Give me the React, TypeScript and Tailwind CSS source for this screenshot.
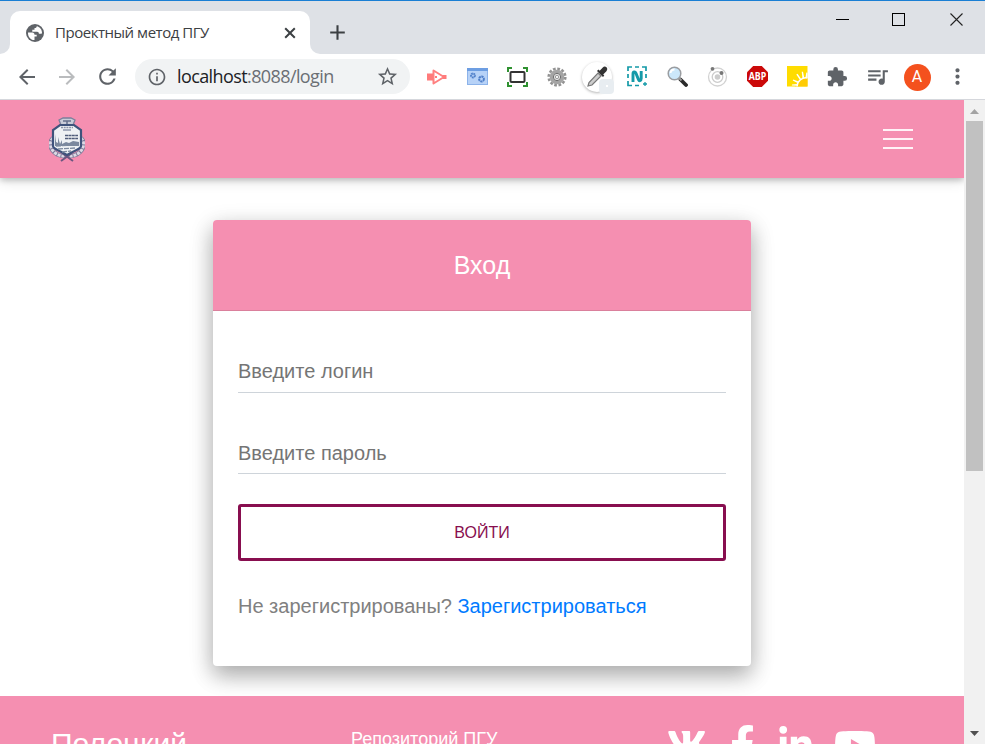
import React from "react";
import { FaVk, FaFacebookF, FaLinkedinIn, FaYoutube } from "react-icons/fa";
import { MdArrowBack, MdArrowForward, MdRefresh, MdInfoOutline, MdStarBorder, MdExtension, MdQueueMusic, MdMoreVert, MdAdd } from "react-icons/md";

const chromeFont = "font-['Open_Sans','Noto_Sans',sans-serif]";

function Cell({ children }: { children: React.ReactNode }) {
  return <div className="flex h-10 w-10 shrink-0 items-center justify-center">{children}</div>;
}

function TabStrip() {
  return (
    <div className="flex h-[54px] items-start justify-between border-t border-[#1a7fd4] bg-[#dee1e6]">
      <div className="flex">
        <div className="mt-[43px] h-[10px] w-[10px] bg-white">
          <div className="h-full w-full rounded-br-[10px] bg-[#dee1e6]" />
        </div>
        <div className="mt-[10px] flex h-[43px] w-[300px] items-center rounded-t-[10px] bg-white pl-[16px] pr-[11px]">
          <svg width="18" height="18" viewBox="0 0 18 18">
            <circle cx="9" cy="9" r="9" fill="#5f6368" />
            <path d="M2 8.500h4.500c1.200 0 2 1 2 2.200h2.200v1.800H8.500v3.600C4.700 16.300 1.700 12.700 2 8.500z" fill="#fff" />
            <path d="M10.800 2.200c-.2 1.300-1 1.800-2.300 1.800v1.700H6.300v2h4.800c1.200 0 1.800.8 1.800 2h2c.7.300 1-.2 1.100-.8.200-3.200-2.100-6-5.200-6.700z" fill="#fff" />
          </svg>
          <span className={`${chromeFont} ml-[11px] flex-1 whitespace-nowrap text-[15px] tracking-[-0.47px] text-[#3c4043]`}>Проектный метод ПГУ</span>
          <svg width="18" height="18" viewBox="0 0 18 18">
            <path d="M4.200 4.200l9.600 9.600M13.800 4.200l-9.600 9.600" stroke="#3c4043" strokeWidth="2" />
          </svg>
        </div>
        <div className="mt-[43px] h-[10px] w-[10px] bg-white">
          <div className="h-full w-full rounded-bl-[10px] bg-[#dee1e6]" />
        </div>
        <MdAdd className="ml-[5px] mt-[19px]" size={25} color="#3c4043" />
      </div>
      <div className="flex gap-[43px] pr-[21px] pt-[12px]">
        <svg width="14" height="14"><path d="M0 6.500H13" stroke="#000" /></svg>
        <svg className="-ml-px" width="14" height="14"><rect x=".5" y=".5" width="12" height="12" fill="none" stroke="#000" /></svg>
        <svg className="ml-px" width="14" height="14"><path d="M.5.5l12 12M12.500.5l-12 12" stroke="#222" strokeWidth="1.100" /></svg>
      </div>
    </div>
  );
}

function Toolbar() {
  return (
    <div className="flex h-[46px] items-center border-b border-[#d5d7dc] bg-white pl-[7px]">
      <Cell><MdArrowBack size={24} color="#5f6368" /></Cell>
      <Cell><MdArrowForward size={24} color="#babcbe" /></Cell>
      <Cell><MdRefresh size={25} color="#5f6368" /></Cell>
      <div className="ml-[8px] mr-[7px] flex h-[35px] w-[275px] shrink-0 items-center rounded-full bg-[#f1f3f4] pl-[12px] pr-[11px]">
        <MdInfoOutline size={20} color="#5f6368" />
        <span className={`${chromeFont} ml-[10px] flex-1 text-[18px] tracking-[-0.6px] text-[#202124]`}>
          localhost<span className="text-[#6b6f74]">:8088/login</span>
        </span>
        <MdStarBorder size={23} color="#5f6368" />
      </div>
      <Cell>
        <svg width="20" height="18" viewBox="0 0 20 18">
          <path d="M6.500 2.500L17 9 6.500 15.500z" fill="#fff" stroke="#ff8080" strokeWidth="2" strokeLinejoin="round" />
          <path d="M0 5.500h6v7H0zM8 8h2v2H8zM15.500 7h4v4h-4z" fill="#ff7b7b" />
        </svg>
      </Cell>
      <Cell>
        <svg width="21" height="17" viewBox="0 0 21 17">
          <rect x=".5" y=".5" width="20" height="16" fill="#b7d2f7" stroke="#8cb3ea" />
          <path d="M0 0h21v3H0z" fill="#6d9ee2" />
          <circle cx="6" cy="7.500" r="1.900" fill="none" stroke="#4f7fc9" strokeWidth="2" strokeDasharray="1.600 .5" />
          <circle cx="14.500" cy="11" r="2.400" fill="none" stroke="#4f7fc9" strokeWidth="2" strokeDasharray="2 .5" />
        </svg>
      </Cell>
      <Cell>
        <svg width="21" height="20" viewBox="0 0 21 20" fill="none">
          <path d="M1 5V1h4M16 1h4v4M20 15v4h-4M5 19H1v-4" stroke="#2f9130" strokeWidth="2" />
          <rect x="3.500" y="5" width="14" height="10" rx="1" stroke="#333" strokeWidth="2" />
        </svg>
      </Cell>
      <Cell>
        <svg width="20" height="20" viewBox="0 0 20 20" fill="none">
          <circle cx="10" cy="10" r="8.300" stroke="#929292" strokeWidth="2.600" strokeDasharray="2.700 1.650" />
          <circle cx="10" cy="10" r="5.700" fill="#d2d2d2" stroke="#a5a5a5" strokeWidth="3.200" />
          <circle cx="10" cy="10" r="3.700" fill="#ddd" stroke="#6f6f6f" />
          <circle cx="10" cy="10" r="1.600" fill="#fff" stroke="#999" />
        </svg>
      </Cell>
      <Cell>
        <div className="relative flex h-[30px] w-[30px] items-center justify-center rounded-full bg-white shadow-[0_1px_3px_rgba(0,0,0,0.3)]">
          <svg width="21" height="21" viewBox="0 0 21 21">
            <path d="M1 20l1-3.500L11 7l3 3-9 9z" fill="#ccc" stroke="#777" strokeWidth="1.200" />
            <path d="M10 5l6 6 1.300-1.400-1.100-1.200 3.200-3.200C22 2 18-1 15.800 1.500L12.700 4.700l-1.300-1.100z" fill="#333" />
          </svg>
          <div className="absolute -bottom-[2px] -right-[2px] flex h-[15px] w-[15px] items-center justify-center rounded-sm bg-[#e8edf1]">
            <div className="h-[2px] w-[2px] bg-white" />
          </div>
        </div>
      </Cell>
      <Cell>
        <svg width="22" height="21" viewBox="0 0 22 21" fill="none" stroke="#149aa8">
          <path d="M2 5V1h4M9 1h4M16 1h4v4M2 8v4M2 15v4.500h4M9 19.500h4M20 8v4" strokeWidth="1.700" />
          <path d="M7 16V8c0-2.600 2.200-2.600 3-.6l2.400 6c.8 2 2.800 1.600 2.800-.8V5" strokeWidth="2.900" />
          <path d="M19 16v4M17 18h4" strokeWidth="1.300" />
        </svg>
      </Cell>
      <Cell>
        <svg width="21" height="21" viewBox="0 0 21 21">
          <path d="M13.500 13.500L19 19" stroke="#2b2b2b" strokeWidth="3.800" strokeLinecap="round" />
          <path d="M11.500 11.500l3 3" stroke="#999" strokeWidth="2" />
          <circle cx="7.500" cy="7.500" r="6.300" fill="#cce8fb" stroke="#9a9da1" strokeWidth="1.500" />
          <path d="M3.500 7a4 4 0 0 1 4-3.500" fill="none" stroke="#fff" strokeWidth="2" />
        </svg>
      </Cell>
      <Cell>
        <svg width="21" height="21" viewBox="0 0 21 21" fill="none">
          <circle cx="10.500" cy="11" r="9" stroke="#d2d2d2" strokeWidth="1.300" />
          <circle cx="10.500" cy="11" r="5.300" stroke="#ccc" strokeWidth="1.300" />
          <circle cx="10.500" cy="11" r="2.800" fill="#ccc" />
          <circle cx="5.500" cy="2.800" r="1.900" fill="#777" />
          <circle cx="14.500" cy="7" r="2" fill="#777" />
        </svg>
      </Cell>
      <Cell>
        <svg width="21" height="21" viewBox="0 0 21 21">
          <path d="M6.200 0h8.600L21 6.200v8.600L14.800 21H6.200L0 14.800V6.200z" fill="#cb0909" />
          <text x="10.500" y="14" textAnchor="middle" textLength="17.500" lengthAdjust="spacingAndGlyphs" className="font-['Open_Sans',sans-serif] text-[10px] font-bold" fill="#fff">ABP</text>
        </svg>
      </Cell>
      <Cell>
        <svg width="21" height="21" viewBox="0 0 21 21">
          <path d="M0 0h20.500v20.500H0z" fill="#ffdc00" />
          <path d="M8.500 20.500C9 14.500 14 11 20.500 11.500v9z" fill="#ffcb05" />
          <path d="M10 20.500c0-5 5-9.500 10.500-8.500" fill="none" stroke="#fff" strokeWidth="1.500" />
          <path d="M9.700 19.800l-4.900-.3.200-1 5-.5zM10.500 17l-4.800-2.500.6-1 5.200 2zM13 14L9.300 8.500l1.200-.7 3.700 5.200zM15.500 12.300l-.8-6.500 1.300-.1 1.300 6.200zM18.500 11.500l.8-5 1.200.2v5z" fill="#fff" />
        </svg>
      </Cell>
      <Cell><MdExtension size={22} color="#5f6368" /></Cell>
      <Cell><MdQueueMusic size={25} color="#5f6368" /></Cell>
      <Cell>
        <div className="mt-px flex h-[27px] w-[27px] items-center justify-center rounded-full bg-[#f4511e] font-[Roboto,sans-serif] text-[16px] text-white">A</div>
      </Cell>
      <Cell><MdMoreVert size={25} color="#5f6368" /></Cell>
    </div>
  );
}

function Crest() {
  return (
    <svg width="36" height="45" viewBox="0 0 36 45" fill="none">
      <path d="M4 21C0 25 1 31 5 35c3 3 7 4 11 4M32 21c4 4 3 10-1 14-3 3-7 4-11 4" stroke="#7c7797" strokeWidth="4.500" />
      <path d="M4 21C0 25 1 31 5 35c3 3 7 4 11 4M32 21c4 4 3 10-1 14-3 3-7 4-11 4" stroke="#dcd9e4" strokeWidth="3" strokeDasharray="3 1" />
      <path d="M12 44l11-8M24 44l-11-8" stroke="#6b5680" strokeWidth="2" />
      <path d="M12 8l-2-5 4-2h8l4 2-2 5z" fill="#c9ccd8" stroke="#7b7f9b" strokeWidth="1.300" />
      <path d="M14 4h8M18 4v4" stroke="#66708c" strokeWidth="1.500" />
      <path d="M11 8h14l7 5v16c0 3-6 4-14 9-8-5-14-6-14-9V13z" fill="#eef1f4" stroke="#3f537c" strokeWidth="2.200" />
      <path d="M12 10.500h12" stroke="#8a93a8" strokeWidth="1.400" strokeDasharray="2 .7" />
      <path d="M14 13h8" stroke="#75809a" strokeWidth="1.200" />
      <path d="M16 18.500h13M16 21.500h13" stroke="#4f5c7a" strokeWidth="1.700" strokeDasharray="3 .4" />
      <path d="M6 29V17l1 8 2 1v-6l2 7 2-4v4l4-2 3 1 4-2 6 1v4z" fill="#7b889e" />
      <path d="M7 29l20-1M9 32l17-1M13 35l9-1" stroke="#7d8a9f" strokeWidth="1.300" strokeDasharray="5 1" />
    </svg>
  );
}

function LoginCard() {
  return (
    <form className="mx-auto mt-[42px] h-[446px] w-[538px] rounded-[4px] bg-white shadow-[0_10px_21px_rgba(0,0,0,0.2),0_7px_25px_rgba(0,0,0,0.19)]">
      <h1 className="flex h-[91px] items-center justify-center rounded-t-[4px] border-b border-[#da809c] bg-[#f58fb1] pt-[2px] text-[25px] text-white">Вход</h1>
      <div className="flex flex-col px-[25px]">
        <input className="mt-[38px] h-[44px] border-b border-[#ced4da] pt-[2px] text-[20px] outline-none placeholder:text-[#757575]" placeholder="Введите логин" />
        <input type="password" className="mt-[38px] h-[43px] border-b border-[#ced4da] pt-[2px] text-[20px] outline-none placeholder:text-[#757575]" placeholder="Введите пароль" />
        <button type="button" className="mt-[30px] h-[57px] rounded-[3px] border-[3px] border-[#880e4f] text-[16px] text-[#880e4f]">ВОЙТИ</button>
        <p className="mt-[30px] whitespace-nowrap text-[20px] leading-[30px] text-[#808080]">
          Не зарегистрированы? <a className="text-[#007bff]">Зарегистрироваться</a>
        </p>
      </div>
    </form>
  );
}

function Scrollbar() {
  return (
    <div className="flex w-[21px] shrink-0 flex-col items-center justify-between bg-[#f1f1f1]">
      <div className="flex flex-col items-center">
        <svg className="h-[21px] w-[21px]"><path d="M6 14l4.500-5 4.500 5z" fill="#a3a3a3" /></svg>
        <div className="h-[350px] w-[17px] bg-[#c1c1c1]" />
      </div>
      <svg className="h-[21px] w-[21px]"><path d="M6 8l4.500 5L15 8z" fill="#505050" /></svg>
    </div>
  );
}

export default function App() {
  return (
    <div className="flex h-[744px] w-[985px] flex-col overflow-hidden bg-white font-['Liberation_Sans',Arial,sans-serif]">
      <TabStrip />
      <Toolbar />
      <div className="flex h-[644px]">
        <div className="flex w-[964px] flex-col overflow-hidden">
          <header className="flex h-[78px] shrink-0 items-center justify-between bg-[#f58fb1] pl-[49px] pr-[51px] shadow-[0_2px_6px_rgba(0,0,0,0.2),0_2px_13px_rgba(0,0,0,0.15)]">
            <Crest />
            <div className="flex flex-col gap-[7px]">
              <div className="h-[2px] w-[30px] bg-[#fff3f7]" />
              <div className="h-[2px] w-[30px] bg-[#fff3f7]" />
              <div className="h-[2px] w-[30px] bg-[#fff3f7]" />
            </div>
          </header>
          <LoginCard />
          <footer className="mt-[30px] flex h-[48px] shrink-0 items-start overflow-hidden bg-[#f58fb1] pl-[51px] text-white">
            <div className="w-[300px] pt-[30px] text-[30px] leading-[36px]">Полоцкий</div>
            <div className="w-[316px] pt-[28px] text-[18px] leading-[30px]">Репозиторий ПГУ</div>
            <FaVk className="mt-[26px]" size={40} />
            <FaFacebookF className="ml-[16px] mt-[29px]" size={39} />
            <FaLinkedinIn className="ml-[15px] mt-[30px]" size={37} />
            <FaYoutube className="ml-[20px] mt-[28px]" size={42} />
          </footer>
        </div>
        <Scrollbar />
      </div>
    </div>
  );
}
